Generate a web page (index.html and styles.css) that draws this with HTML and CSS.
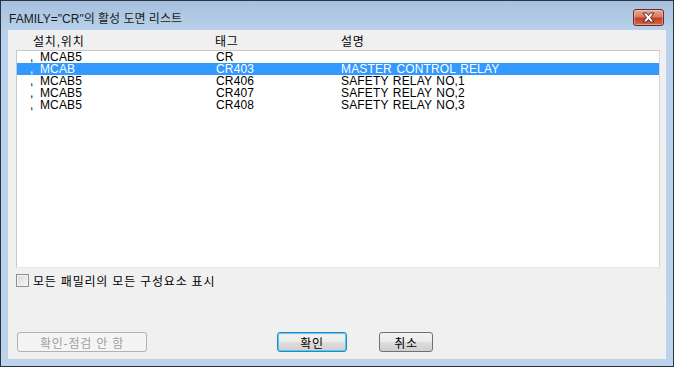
FILE: index.html
```html
<!DOCTYPE html>
<html lang="ko">
<head>
<meta charset="utf-8">
<link rel="stylesheet" href="styles.css">
</head>
<body>
<div class="window">
  <div class="titlebar">
    <span class="title">FAMILY="CR"의 활성 도면 리스트</span>
    <div class="close">
      <svg width="15" height="11" viewBox="0 0 15 11">
        <path d="M2 1 L5.5 1 L7.5 3.5 L9.5 1 L13 1 L9.5 5.5 L13 10 L9.5 10 L7.5 7.5 L5.5 10 L2 10 L5.5 5.5 Z" fill="#ffffff" stroke="#5a2020" stroke-width="1" stroke-linejoin="round"/>
      </svg>
    </div>
  </div>
  <div class="client">
    <div class="header">
      <span class="c1 ko">설치,위치</span>
      <span class="c2 ko">태그</span>
      <span class="c3 ko">설명</span>
    </div>
    <div class="listbox">
      <div class="row"><span class="c1">, MCAB5</span><span class="c2">CR</span><span class="c3"></span></div>
      <div class="row sel"><span class="c1">, MCAB</span><span class="c2">CR403</span><span class="c3">MASTER CONTROL RELAY</span></div>
      <div class="row"><span class="c1">, MCAB5</span><span class="c2">CR406</span><span class="c3">SAFETY RELAY NO,1</span></div>
      <div class="row"><span class="c1">, MCAB5</span><span class="c2">CR407</span><span class="c3">SAFETY RELAY NO,2</span></div>
      <div class="row"><span class="c1">, MCAB5</span><span class="c2">CR408</span><span class="c3">SAFETY RELAY NO,3</span></div>
    </div>
    <label class="check"><span class="box"></span><span class="ko">모든 패밀리의 모든 구성요소 표시</span></label>
    <div class="buttons">
      <div class="btn disabled wide ko">확인-점검 안 함</div>
      <div class="btn focus ok ko">확인</div>
      <div class="btn cancel ko">취소</div>
    </div>
  </div>
</div>
</body>
</html>
```

FILE: styles.css
```css
* { box-sizing: border-box; }
html, body { margin: 0; padding: 0; background: #ffffff; }
body {
  font-family: "Liberation Sans", "Noto Sans CJK KR", sans-serif;
  font-size: 12px;
  color: #000;
}
.ko { letter-spacing: 0.8px; }
.window {
  width: 674px;
  height: 367px;
  border: 1px solid #2a3440;
  background: linear-gradient(#a6c1de 0px, #b9d1ea 30px, #bcd3eb 100%);
  padding: 0 7px 7px 7px;
  display: flex;
  flex-direction: column;
}
.titlebar {
  height: 29px;
  display: flex;
  align-items: center;
  padding-top: 4px;
}
.title {
  padding-left: 1px;
  font-size: 12px;
  color: #1a1a1a;
}
.close {
  margin-left: auto;
  margin-right: 2px;
  width: 31px;
  height: 17px;
  border: 1px solid #6a2a2a;
  border-radius: 3px;
  background: linear-gradient(#e9a995 0%, #d77b63 45%, #c23f24 55%, #d06a4c 100%);
  display: flex;
  align-items: center;
  justify-content: center;
  box-shadow: inset 0 0 0 1px rgba(255,255,255,0.35);
}
.client {
  flex: 1;
  background: #f0f0f0;
  padding: 0 6px 0 8px;
}
.header {
  height: 20px;
  display: flex;
  align-items: center;
}
.header .c1 { margin-left: 17px; width: 182px; }
.header .c2 { width: 126px; }
.listbox {
  width: 644px;
  height: 218px;
  background: #ffffff;
  border: 1px solid #c8c8c8;
  border-right-color: #d6d6d6;
  border-bottom-color: #e6e6e6;
}
.row {
  height: 12px;
  line-height: 12px;
  display: flex;
  white-space: nowrap;
  word-spacing: 3px;
  letter-spacing: 0.15px;
}
.row .c1 { padding-left: 13px; width: 199px; }
.row .c2 { width: 125px; }
.row .c3 { word-spacing: 1px; }
.row.sel { background: #3399ff; color: #ffffff; }
.check {
  display: flex;
  align-items: center;
  margin-top: 5px;
  height: 14px;
  gap: 4px;
}
.box {
  width: 13px;
  height: 13px;
  border: 1px solid #8e8f8f;
  background: linear-gradient(135deg, #d9d9d9, #f7f7f7);
  box-shadow: inset 0 0 0 1px #f4f4f4;
}
.buttons {
  margin-top: 45px;
  height: 20px;
  display: flex;
}
.btn {
  height: 20px;
  border: 1px solid #707070;
  border-radius: 3px;
  background: linear-gradient(#f2f2f2 0%, #ebebeb 50%, #dddddd 51%, #cfcfcf 100%);
  display: flex;
  align-items: center;
  justify-content: center;
  font-size: 12px;
}
.btn.wide {
  width: 130px;
  margin-left: 1px;
}
.btn.disabled {
  border-color: #adb2b5;
  background: #f4f4f4;
  color: #a0a0a0;
}
.btn.ok {
  width: 70px;
  margin-left: 130px;
}
.btn.focus {
  border-color: #3c7fb1;
  box-shadow: inset 0 0 0 1px #48d1ff;
}
.btn.cancel {
  width: 54px;
  margin-left: 32px;
}
```
